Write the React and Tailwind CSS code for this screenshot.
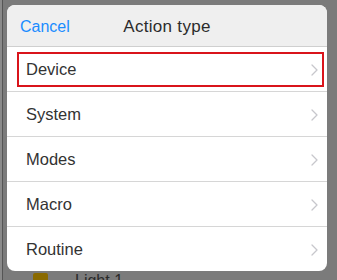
import React from 'react';

const items = ['Device', 'System', 'Modes', 'Macro', 'Routine'];

const Chevron = () => (
  <svg width="7" height="12" viewBox="0 0 7 12" fill="none" className="shrink-0">
    <path d="M1 1l5 5-5 5" stroke="#c7c7cc" strokeWidth="1.3" strokeLinecap="round" strokeLinejoin="round" />
  </svg>
);

const App = () => {
  return (
    <div
      className="w-[337px] h-[280px] overflow-hidden bg-[#7b7b7b] flex"
      style={{ fontFamily: '"Liberation Sans", Arial, sans-serif' }}
    >
      {/* left edge of the page behind */}
      <div className="w-[2px] bg-[#8a8a8a]" />
      <div className="w-[1px] bg-[#555]" />
      <div className="flex-1 flex flex-col pl-[4px] pr-[10px] pt-[5px]">
        <div className="w-[320px] shrink-0 bg-white rounded-[8px] overflow-hidden flex flex-col">
          <div className="h-[42px] pt-[3px] bg-[#efefef] border-b border-[#cfcfcf] flex items-center relative px-[13px]">
            <span className="text-[16px] text-[#1a8cff]">Cancel</span>
            <span className="absolute left-0 right-0 text-center text-[17px] tracking-[0.3px] text-[#2b2b2b] pointer-events-none">
              Action type
            </span>
          </div>
          {items.map((label, i) => (
            <div
              key={label}
              className={`h-[44px] flex items-center pt-[1px] ${i > 0 ? 'border-t border-[#d6d6d6] h-[45px]' : ''}`}
            >
              {i === 0 ? (
                <div className="ml-[10px] mr-[3px] flex-1 h-[35px] border-2 border-[#d9141b] flex items-center justify-between pl-[7px] pr-[4px]">
                  <span className="text-[16.5px] text-[#333]">{label}</span>
                  <Chevron />
                </div>
              ) : (
                <div className="flex-1 flex items-center justify-between pl-[19px] pr-[9px]">
                  <span className="text-[16.5px] text-[#333]">{label}</span>
                  <Chevron />
                </div>
              )}
            </div>
          ))}
        </div>
        {/* content of the page behind, peeking out under the sheet */}
        <div className="mt-[2px] flex items-start gap-[27px] pl-[26px]">
          <div className="w-[15px] h-[16px] bg-[#8a6a00] rounded-[2px]" />
          <span className="text-[16px] leading-[16px] text-[#2a2a2a]">Light 1</span>
        </div>
      </div>
    </div>
  );
};

export default App;
